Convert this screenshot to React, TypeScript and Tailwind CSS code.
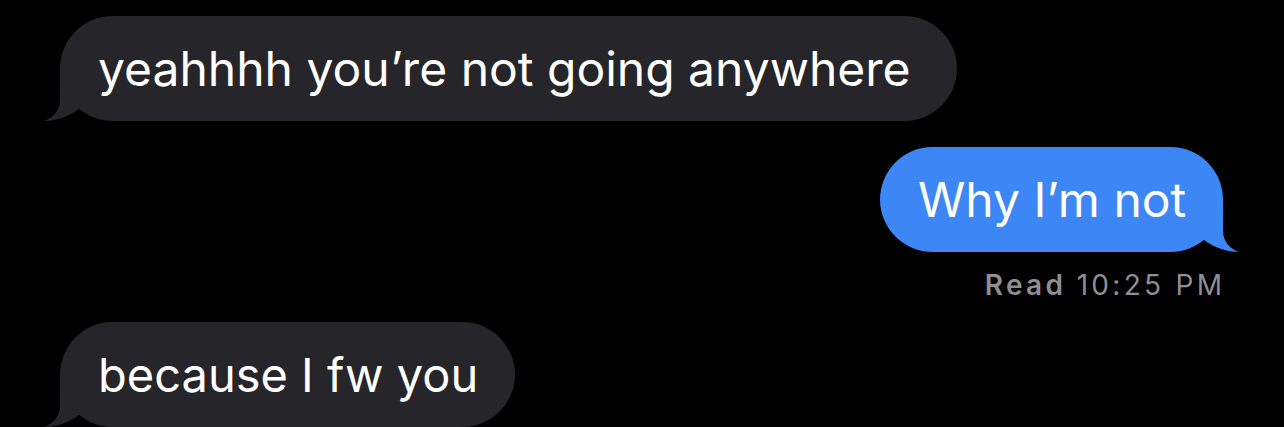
import React from "react";

const GRAY = "#262529";
const BLUE = "#3d86f5";

function TailLeft({ color }: { color: string }) {
  return (
    <svg
      className="absolute bottom-0 left-[-16px]"
      width="50"
      height="55"
      viewBox="0 0 50 55"
    >
      <path
        d="M16 2 L16 34 C16 44 9 52 0 55 C12 55 24 51 35 43 L46 2 Z"
        fill={color}
      />
    </svg>
  );
}

function TailRight({ color }: { color: string }) {
  return (
    <svg
      className="absolute bottom-0 right-[-16px]"
      width="50"
      height="55"
      viewBox="0 0 50 55"
    >
      <path
        d="M34 2 L34 34 C34 44 41 52 50 55 C38 55 26 51 15 43 L4 2 Z"
        fill={color}
      />
    </svg>
  );
}

export default function App() {
  return (
    <div
      className="w-[1284px] h-[427px] overflow-hidden bg-black flex flex-col pt-[16px] text-white"
      style={{ fontFamily: 'Inter, "Liberation Sans", Arial, sans-serif' }}
    >
      {/* incoming */}
      <div className="pl-[60px]">
        <div className="relative w-[897px] h-[105px]">
          <TailLeft color={GRAY} />
          <div className="relative h-full rounded-full bg-[#262529] pl-[38px] text-[48px] leading-[105px] whitespace-nowrap">
            yeahhhh you’re not going anywhere
          </div>
        </div>
      </div>

      {/* outgoing */}
      <div className="flex justify-end pr-[61px] mt-[26px]">
        <div className="relative w-[343px] h-[105px]">
          <TailRight color={BLUE} />
          <div className="relative h-full rounded-full bg-[#3d86f5] pl-[38px] text-[48px] leading-[105px] whitespace-nowrap">
            Why I’m not
          </div>
        </div>
      </div>

      {/* delivery status */}
      <div className="flex justify-end pr-[62px] mt-[18px] text-[28px] leading-[30px] tracking-[3.3px] text-[#8e8e93] whitespace-pre">
        <span className="font-semibold">Read </span>
        <span className="mr-[-3.3px]">10:25 PM</span>
      </div>

      {/* incoming */}
      <div className="pl-[60px] mt-[22px]">
        <div className="relative w-[455px] h-[105px]">
          <TailLeft color={GRAY} />
          <div className="relative h-full rounded-full bg-[#262529] pl-[38px] text-[47px] leading-[105px] whitespace-nowrap">
            because I fw you
          </div>
        </div>
      </div>
    </div>
  );
}
